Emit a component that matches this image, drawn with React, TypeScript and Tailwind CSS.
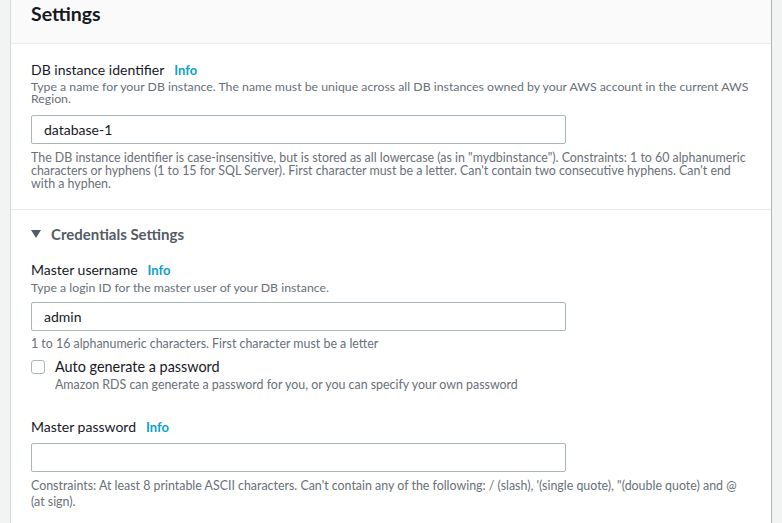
const Info = () => (
  <span className="ml-[10px] text-[13px] font-bold text-[#0a9fd0]">Info</span>
);

const TextInput = ({ value = "" }: { value?: string }) => (
  <div className="flex h-[29px] w-[535px] items-center rounded-[2px] border border-[#aab7b8] bg-white px-3 text-[14px] text-[#16191f]">
    {value}
  </div>
);

export default function App() {
  return (
    <div
      className="flex min-h-[523px] bg-[#f2f3f3]"
      style={{ fontFamily: "Lato, 'Open Sans', sans-serif" }}
    >
      <div className="ml-[10px] mr-[10px] flex-1 overflow-hidden border-l border-r border-l-[#d5dbdb] border-r-[#aab7b8] bg-white">
        <div className="h-[44px] border-b border-[#eaeded] bg-[#fafafa] px-5 pt-[2px]">
          <h2 className="text-[19.5px] font-bold leading-[24px] text-[#16191f]">
            Settings
          </h2>
        </div>

        <div className="border-b border-[#eaeded] px-5 pb-[19px] pt-[17px]">
          <div className="text-[14px] leading-[18px] text-[#16191f]">
            DB instance identifier
            <Info />
          </div>
          <p className="mt-[2px] text-[12.3px] leading-[12px] text-[#687078]">
            Type a name for your DB instance. The name must be unique across all
            DB instances owned by your AWS account in the current AWS Region.
          </p>
          <div className="mt-[10px]">
            <TextInput value="database-1" />
          </div>
          <p className="mt-[7px] text-[12.4px] leading-[13px] text-[#687078]">
            The DB instance identifier is case-insensitive, but is stored as all
            lowercase (as in "mydbinstance"). Constraints: 1 to 60 alphanumeric
            characters or hyphens (1 to 15 for SQL Server). First character must
            be a letter. Can't contain two consecutive hyphens. Can't end with a
            hyphen.
          </p>
        </div>

        <div className="px-5 pt-[13px]">
          <div className="flex items-center gap-[10px] text-[15px] font-bold text-[#545b64]">
            <svg width="10" height="8" viewBox="0 0 10 8">
              <path d="M0 0 H10 L5 8 Z" fill="#545b64" />
            </svg>
            Credentials Settings
          </div>

          <div className="mt-[15px] text-[14px] leading-[18px] text-[#16191f]">
            Master username
            <Info />
          </div>
          <p className="mt-[2px] text-[12.3px] leading-[14px] text-[#687078]">
            Type a login ID for the master user of your DB instance.
          </p>
          <div className="mt-[7px]">
            <TextInput value="admin" />
          </div>
          <p className="mt-[6px] text-[12.4px] leading-[13px] text-[#687078]">
            1 to 16 alphanumeric characters. First character must be a letter
          </p>

          <div className="mt-[8px] flex gap-[10px]">
            <div className="mt-[2px] h-[14px] w-[14px] rounded-[3px] border border-[#aab7b8] bg-white" />
            <div>
              <div className="text-[14.4px] leading-[18px] text-[#16191f]">
                Auto generate a password
              </div>
              <p className="mt-[2px] text-[12.4px] leading-[14px] text-[#687078]">
                Amazon RDS can generate a password for you, or you can specify
                your own password
              </p>
            </div>
          </div>

          <div className="mt-[26px] text-[14px] leading-[18px] text-[#16191f]">
            Master password
            <Info />
          </div>
          <div className="mt-[7px]">
            <TextInput />
          </div>
          <p className="mt-[6px] text-[12.4px] leading-[16px] text-[#687078]">
            Constraints: At least 8 printable ASCII characters. Can't contain any
            of the following: / (slash), '(single quote), "(double quote) and @
            (at sign).
          </p>
        </div>
      </div>
    </div>
  );
}
